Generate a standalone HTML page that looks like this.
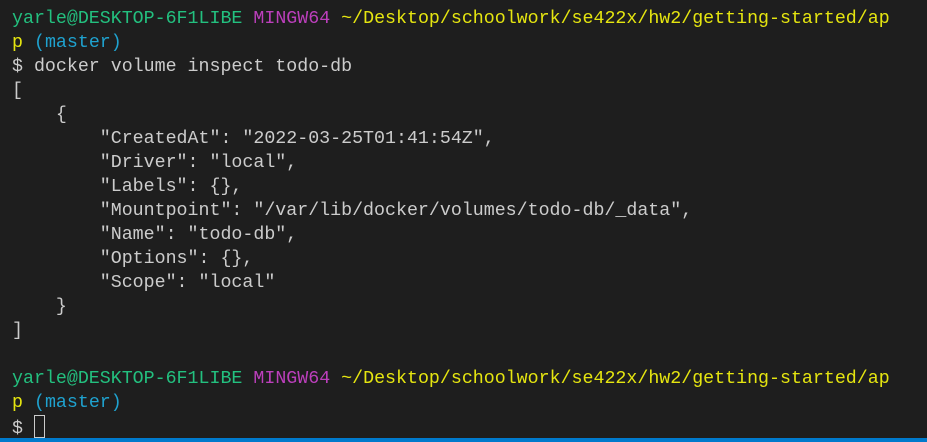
<!DOCTYPE html>
<html><head><style>
html,body{margin:0;padding:0;background:#1e1e1e;width:927px;height:442px;overflow:hidden}
pre{margin:0;position:absolute;left:12px;top:7px;font-family:"Liberation Mono",monospace;font-size:18.3px;line-height:24px;color:#cccccc;white-space:pre}
.g{color:#23c07f}.m{color:#bc3fbc}.y{color:#e5e510}.c{color:#1fa2cf}
.cur{display:inline-block;width:9px;height:21px;border:1px solid #ccc;vertical-align:-5px}
.bar{position:absolute;left:0;right:0;bottom:0;height:4px;background:#007acc}
</style></head><body>
<pre><span class="g">yarle@DESKTOP-6F1LIBE</span> <span class="m">MINGW64</span> <span class="y">~/Desktop/schoolwork/se422x/hw2/getting-started/ap</span>
<span class="y">p</span> <span class="c">(master)</span>
$ docker volume inspect todo-db
[
    {
        "CreatedAt": "2022-03-25T01:41:54Z",
        "Driver": "local",
        "Labels": {},
        "Mountpoint": "/var/lib/docker/volumes/todo-db/_data",
        "Name": "todo-db",
        "Options": {},
        "Scope": "local"
    }
]

<span class="g">yarle@DESKTOP-6F1LIBE</span> <span class="m">MINGW64</span> <span class="y">~/Desktop/schoolwork/se422x/hw2/getting-started/ap</span>
<span class="y">p</span> <span class="c">(master)</span>
$ <span class="cur"></span></pre>
<div class="bar"></div>
</body></html>
